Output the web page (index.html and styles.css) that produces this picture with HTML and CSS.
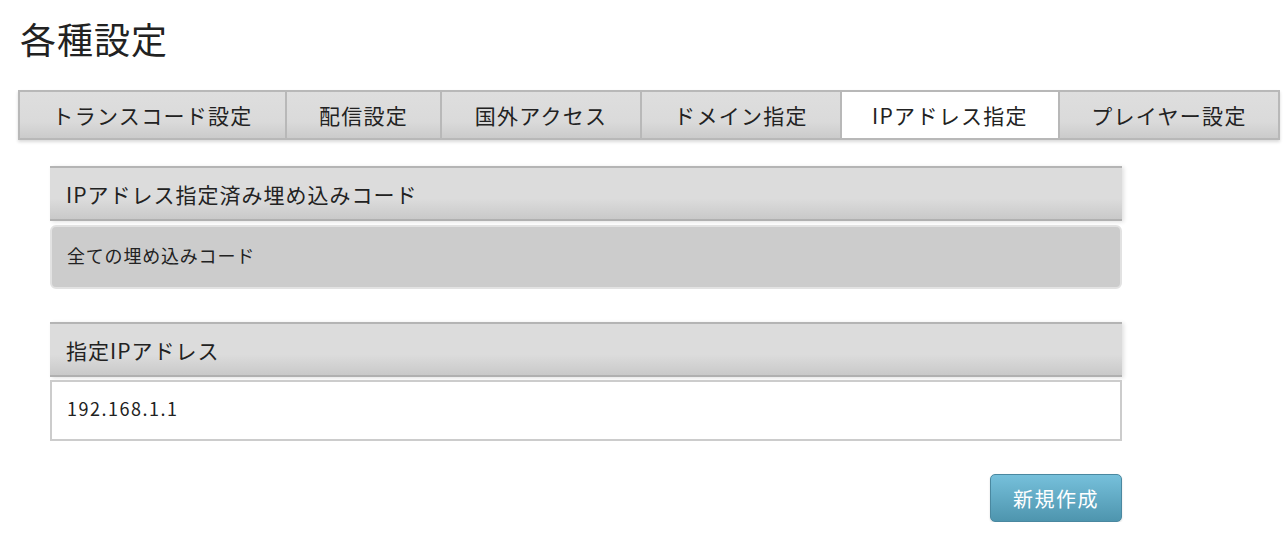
FILE: index.html
```html
<!DOCTYPE html>
<html lang="ja">
<head>
    <meta charset="UTF-8">
    <title>各種設定</title>
    <link rel="stylesheet" href="styles.css">
</head>
<body>
<h1 class="page-title">各種設定</h1>

<ul class="tabs">
    <li class="tab">トランスコード設定</li>
    <li class="tab">配信設定</li>
    <li class="tab">国外アクセス</li>
    <li class="tab">ドメイン指定</li>
    <li class="tab active">IPアドレス指定</li>
    <li class="tab">プレイヤー設定</li>
</ul>

<div class="content">
    <section class="panel">
        <h2 class="panel-head">IPアドレス指定済み埋め込みコード</h2>
        <div class="panel-body code-list">全ての埋め込みコード</div>
    </section>

    <section class="panel">
        <h2 class="panel-head">指定IPアドレス</h2>
        <div class="panel-body ip-list">192.168.1.1</div>
    </section>

    <div class="actions">
        <button type="button" class="btn-create">新規作成</button>
    </div>
</div>
</body>
</html>
```

FILE: styles.css
```css
body {
    margin: 0;
    font-family: "Noto Sans CJK JP", "Noto Sans", sans-serif;
    color: #222;
    background: #fff;
}
.page-title {
    margin: 0;
    padding: 13px 0 0 20px;
    font-size: 36px;
    font-weight: normal;
    line-height: 50px;
    letter-spacing: 1px;
}

/* タブ */
.tabs {
    display: grid;
    grid-template-columns: 267px 155px 200px 200px 218px 222px;
    margin: 27px 0 0 18px;
    padding: 0;
    width: 1262px;
    list-style: none;
    box-shadow: 0 2px 3px rgba(0, 0, 0, 0.15);
}
.tab {
    height: 46px;
    line-height: 46px;
    text-align: center;
    font-size: 21px;
    letter-spacing: 1.3px;
    border-top: 2px solid #b8b8b8;
    border-bottom: 2px solid #b8b8b8;
    border-left: 2px solid #b8b8b8;
    background: linear-gradient(#dedede 0%, #dadada 65%, #cbcbcb 100%);
}
.tab:last-child {
    border-right: 2px solid #b8b8b8;
}
.tab.active {
    background: #fff;
}

/* パネル */
.content {
    width: 1072px;
    margin: 26px 0 0 50px;
}
.panel {
    margin-bottom: 33px;
}
.panel-head {
    margin: 0;
    height: 51px;
    line-height: 53px;
    padding-left: 16px;
    font-size: 21px;
    font-weight: normal;
    letter-spacing: 1px;
    border-top: 2px solid #b4b4b4;
    border-bottom: 2px solid #b0b0b0;
    background: linear-gradient(#dcdcdc 0%, #dcdcdc 60%, #c9c9c9 100%);
    box-shadow: 2px 1px 4px rgba(0, 0, 0, 0.12);
}
.panel-body {
    padding-left: 15px;
}
.code-list {
    margin-top: 4px;
    height: 60px;
    line-height: 56px;
    font-size: 18px;
    letter-spacing: 0.8px;
    background: #cccccc;
    border: 2px solid #e2e2e2;
    border-radius: 6px;
}
.ip-list {
    margin-top: 3px;
    height: 57px;
    line-height: 52px;
    font-size: 18px;
    letter-spacing: 1.5px;
    background: #fff;
    border: 2px solid #cccccc;
}

/* ボタン */
.actions {
    display: flex;
    justify-content: flex-end;
}
.btn-create {
    width: 132px;
    height: 48px;
    font-family: inherit;
    font-size: 20px;
    letter-spacing: 1.5px;
    color: #fff;
    background: linear-gradient(#76c0db, #4e95ae);
    border: 1px solid #4a88a0;
    border-radius: 5px;
    box-shadow: 0 1px 2px rgba(0, 0, 0, 0.15);
    cursor: pointer;
}
```
